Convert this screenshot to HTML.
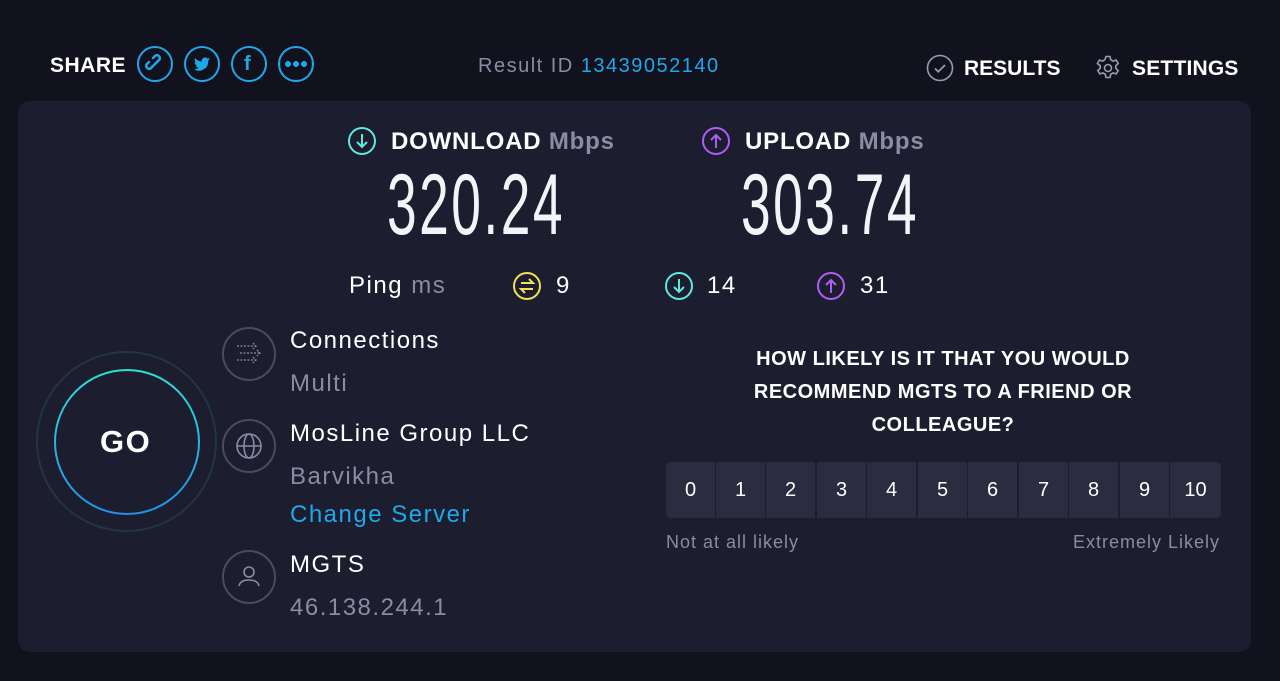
<!DOCTYPE html>
<html><head><meta charset="utf-8"><style>
*{margin:0;padding:0;box-sizing:border-box}
body{width:1280px;height:681px;background:#11121e;font-family:"Liberation Sans",sans-serif;color:#fff;position:relative;overflow:hidden}
.a{position:absolute;white-space:nowrap}
.panel{position:absolute;left:18px;top:101px;width:1233px;height:551px;background:#1c1d2e;border-radius:12px}
.b{font-weight:bold}
.g{color:#8b8ba3}
.ic{position:absolute;width:36px;height:36px;border:2px solid #1fa8e8;border-radius:50%}
.ci{position:absolute;width:54px;height:54px;border:2px solid #4a4b5e;border-radius:50%}
.big{position:absolute;font-size:86px;line-height:86px;transform:scaleX(0.62);transform-origin:left top;font-weight:normal;letter-spacing:4px;color:#f4f4f8}
.t{font-size:24px;letter-spacing:1.5px}
.cell{position:absolute;top:462px;width:49px;height:56px;background:#2b2c40;color:#fff;font-size:20px;text-align:center;line-height:56px}
</style></head><body>
<div class="a b" style="left:50px;top:54px;font-size:21px;letter-spacing:0.5px">SHARE</div>
<div class="ic" style="left:137px;top:46px"><svg width="32" height="32" viewBox="0 0 32 32"><g fill="none" stroke="#1fa8e8" stroke-width="2.4" stroke-linecap="round"><path d="M14 18l-2.5 2.5a3 3 0 0 1-4-4L10 14"/><path d="M18 14l2.5-2.5a3 3 0 0 0-4-4L14 10"/><path d="M13 19l6-6"/></g></svg></div>
<div class="ic" style="left:184px;top:46px"><svg width="32" height="32" viewBox="0 0 32 32"><path fill="#1fa8e8" d="M24 11c-.6.3-1.2.4-1.9.5.7-.4 1.2-1 1.4-1.8-.6.4-1.3.6-2.1.8a3.3 3.3 0 0 0-5.6 3C13.100 13.400 10.700 12.100 9.100 10.100c-.9 1.500-.4 3.400 1 4.400-.5 0-1-.2-1.500-.4 0 1.600 1.100 3 2.600 3.300-.5.100-1 .200-1.500.100.400 1.300 1.700 2.300 3.100 2.300A6.600 6.600 0 0 1 8 21.200 9.300 9.300 0 0 0 22.300 13v-.4c.7-.5 1.200-1 1.700-1.600z"/></svg></div>
<div class="ic" style="left:231px;top:46px"><div class="a b" style="left:11px;top:5px;font-size:20px;color:#1fa8e8">f</div></div>
<div class="ic" style="left:278px;top:46px"><div class="a" style="left:5px;top:13px;width:22px;height:6px;background:radial-gradient(circle 3px at 3px 3px,#1fa8e8 99%,transparent),radial-gradient(circle 3px at 11px 3px,#1fa8e8 99%,transparent),radial-gradient(circle 3px at 19px 3px,#1fa8e8 99%,transparent)"></div></div>
<div class="a g" style="left:478px;top:55px;font-size:20px;letter-spacing:1.5px">Result ID <span style="color:#1fa8e8">13439052140</span></div>
<svg class="a" style="left:926px;top:54px" width="28" height="28" viewBox="0 0 28 28"><circle cx="14" cy="14" r="12.5" fill="none" stroke="#9a9ab0" stroke-width="1.6"/><path d="M9 14.5l3.3 3.2L19 11" fill="none" stroke="#9a9ab0" stroke-width="1.8"/></svg>
<div class="a b" style="left:964px;top:57px;font-size:21px">RESULTS</div>
<svg class="a" style="left:1094px;top:54px" width="28" height="28" viewBox="0 0 28 28"><g fill="none" stroke="#9a9ab0" stroke-width="1.6"><path d="M12 2.5h4l.7 3.2 2.4 1.4 3.100-1 2 3.400-2.400 2.200v2.600l2.400 2.200-2 3.400-3.100-1-2.400 1.400-.7 3.200h-4l-.7-3.200-2.400-1.400-3.100 1-2-3.400 2.400-2.200v-2.600L3.400 9.500l2-3.400 3.100 1 2.400-1.400z"/><circle cx="14" cy="14" r="3.5"/></g></svg>
<div class="a b" style="left:1132px;top:57px;font-size:21px;letter-spacing:0.2px">SETTINGS</div>

<div class="panel"></div>
<svg class="a" style="left:347px;top:126px" width="30" height="30" viewBox="0 0 30 30"><circle cx="15" cy="15" r="13" fill="none" stroke="#5ee8e0" stroke-width="2"/><path d="M15 8v13M10 16l5 5 5-5" fill="none" stroke="#5ee8e0" stroke-width="2"/></svg>
<div class="a b" style="left:391px;top:128px;font-size:24px;letter-spacing:0.8px">DOWNLOAD <span class="g">Mbps</span></div>
<svg class="a" style="left:701px;top:126px" width="30" height="30" viewBox="0 0 30 30"><circle cx="15" cy="15" r="13" fill="none" stroke="#b15cf2" stroke-width="2"/><path d="M15 22V9M10 14l5-5 5 5" fill="none" stroke="#b15cf2" stroke-width="2"/></svg>
<div class="a b" style="left:745px;top:128px;font-size:24px;letter-spacing:0.8px">UPLOAD <span class="g">Mbps</span></div>
<div class="big" style="left:387px;top:162px">320.24</div>
<div class="big" style="left:741px;top:162px">303.74</div>

<div class="a t" style="left:349px;top:272px">Ping <span class="g">ms</span></div>
<svg class="a" style="left:512px;top:271px" width="30" height="30" viewBox="0 0 30 30"><circle cx="15" cy="15" r="13" fill="none" stroke="#f2e055" stroke-width="2"/><path d="M9 12h12l-4-4M21 18H9l4 4" fill="none" stroke="#f2e055" stroke-width="2"/></svg>
<div class="a t" style="left:556px;top:272px">9</div>
<svg class="a" style="left:664px;top:271px" width="30" height="30" viewBox="0 0 30 30"><circle cx="15" cy="15" r="13" fill="none" stroke="#5ee8e0" stroke-width="2"/><path d="M15 8v13M10 16l5 5 5-5" fill="none" stroke="#5ee8e0" stroke-width="2"/></svg>
<div class="a t" style="left:707px;top:272px">14</div>
<svg class="a" style="left:816px;top:271px" width="30" height="30" viewBox="0 0 30 30"><circle cx="15" cy="15" r="13" fill="none" stroke="#b15cf2" stroke-width="2"/><path d="M15 22V9M10 14l5-5 5 5" fill="none" stroke="#b15cf2" stroke-width="2"/></svg>
<div class="a t" style="left:860px;top:272px">31</div>

<div class="a" style="left:36px;top:351px;width:181px;height:181px;border:2px solid #223544;border-radius:50%"></div>
<div class="a" style="left:54px;top:369px;width:146px;height:146px;border-radius:50%;background:linear-gradient(#2ee0d0,#1f90e8)"></div>
<div class="a" style="left:56px;top:371px;width:142px;height:142px;border-radius:50%;background:#1c1d2e"></div>
<div class="a b" style="left:100px;top:424px;font-size:31px;letter-spacing:1.5px">GO</div>

<div class="ci" style="left:222px;top:327px"><svg width="50" height="50" viewBox="0 0 50 50"><g fill="none" stroke="#8b8ba3" stroke-width="1.3"><path d="M13 17h20M29 14l3 3-3 3M16 24h21M33 21l3 3-3 3M13 31h20M29 28l3 3-3 3" stroke-dasharray="2 1.5"/></g></svg></div>
<div class="a t" style="left:290px;top:327px">Connections</div>
<div class="a t g" style="left:290px;top:370px">Multi</div>
<div class="ci" style="left:222px;top:419px"><svg width="50" height="50" viewBox="0 0 50 50"><g fill="none" stroke="#8b8ba3" stroke-width="1.6"><circle cx="25" cy="25" r="12"/><ellipse cx="25" cy="25" rx="5" ry="12"/><path d="M13 25h24"/></g></svg></div>
<div class="a t" style="left:290px;top:420px">MosLine Group LLC</div>
<div class="a t g" style="left:290px;top:463px">Barvikha</div>
<div class="a t" style="left:290px;top:501px;color:#1fa8e8">Change Server</div>
<div class="ci" style="left:222px;top:550px"><svg width="50" height="50" viewBox="0 0 50 50"><g fill="none" stroke="#8b8ba3" stroke-width="1.6"><circle cx="25" cy="20" r="5"/><path d="M15 34c1-5 6-6 10-6s9 1 10 6"/></g></svg></div>
<div class="a t" style="left:290px;top:551px">MGTS</div>
<div class="a t g" style="left:290px;top:594px">46.138.244.1</div>

<div class="a b" style="left:665px;top:343px;width:556px;text-align:center;font-size:20px;line-height:33px;white-space:normal;padding:0 70px;letter-spacing:0.5px">HOW LIKELY IS IT THAT YOU WOULD RECOMMEND MGTS TO A FRIEND OR COLLEAGUE?</div>
<div class="cell" style="left:666px;border-radius:5px 0 0 5px">0</div>
<div class="cell" style="left:716px">1</div>
<div class="cell" style="left:766px">2</div>
<div class="cell" style="left:817px">3</div>
<div class="cell" style="left:867px">4</div>
<div class="cell" style="left:918px">5</div>
<div class="cell" style="left:968px">6</div>
<div class="cell" style="left:1019px">7</div>
<div class="cell" style="left:1069px">8</div>
<div class="cell" style="left:1120px">9</div>
<div class="cell" style="left:1170px;width:51px;border-radius:0 5px 5px 0">10</div>
<div class="a g" style="left:666px;top:532px;font-size:18px;letter-spacing:1px">Not at all likely</div>
<div class="a g" style="right:60px;top:532px;font-size:18px;letter-spacing:1px">Extremely Likely</div>
</body></html>
